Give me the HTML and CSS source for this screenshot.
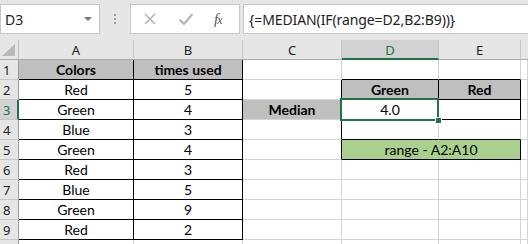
FILE: index.html
```html
<!DOCTYPE html>
<html>
<head>
<meta charset="utf-8">
<link rel="stylesheet" href="styles.css">
</head>
<body>
<div class="app">
  <div class="toolbar">
    <div class="namebox"><span class="nb-text">D3</span><span class="nb-arrow"></span></div>
    <div class="dots"><i></i><i></i><i></i></div>
    <div class="btns">
      <svg class="ico" width="14" height="14" viewBox="0 0 14 14"><path d="M2 2 L12 12 M12 2 L2 12" stroke="#b3b3b3" stroke-width="1.6" fill="none"/></svg>
      <svg class="ico" width="16" height="14" viewBox="0 0 16 14"><path d="M1.5 7.5 L6 12 L14.5 2" stroke="#b3b3b3" stroke-width="2" fill="none"/></svg>
      <span class="fx">f<span class="fx-x">x</span></span>
    </div>
    <div class="formula">{=MEDIAN(IF(range=D2,B2:B9))}</div>
  </div>
  <div class="sheet">
    <div class="corner"><svg width="14" height="12" viewBox="0 0 14 12"><path d="M13 0 L13 12 L0 12 Z" fill="#b9b9b9"/></svg></div>
    <div class="ch">A</div><div class="ch">B</div><div class="ch">C</div><div class="ch ch-sel">D</div><div class="ch">E</div><div class="ch ch-last"></div>

    <div class="rh">1</div><div class="c hd bx">Colors</div><div class="c hd bx">times used</div><div class="c"></div><div class="c bb"></div><div class="c bb"></div><div class="c"></div>
    <div class="rh">2</div><div class="c bx">Red</div><div class="c bx">5</div><div class="c br"></div><div class="c hd bx">Green</div><div class="c hd bx">Red</div><div class="c"></div>
    <div class="rh rh-sel">3</div><div class="c bx">Green</div><div class="c bx">4</div><div class="c hd">Median</div><div class="c bx">4.0</div><div class="c bx"></div><div class="c"></div>
    <div class="rh">4</div><div class="c bx">Blue</div><div class="c bx">3</div><div class="c br"></div><div class="c bb"></div><div class="c bb"></div><div class="c"></div>
    <div class="rh">5</div><div class="c bx">Green</div><div class="c bx">4</div><div class="c br"></div><div class="c note bx">range - A2:A10</div><div class="c"></div>
    <div class="rh">6</div><div class="c bx">Red</div><div class="c bx">3</div><div class="c"></div><div class="c"></div><div class="c"></div><div class="c"></div>
    <div class="rh">7</div><div class="c bx">Blue</div><div class="c bx">5</div><div class="c"></div><div class="c"></div><div class="c"></div><div class="c"></div>
    <div class="rh">8</div><div class="c bx">Green</div><div class="c bx">9</div><div class="c"></div><div class="c"></div><div class="c"></div><div class="c"></div>
    <div class="rh">9</div><div class="c bx">Red</div><div class="c bx">2</div><div class="c"></div><div class="c"></div><div class="c"></div><div class="c"></div>
    <div class="rh"></div><div class="c"></div><div class="c"></div><div class="c"></div><div class="c"></div><div class="c"></div><div class="c"></div>

    <div class="selection"><span class="handle"></span></div>
  </div>
</div>
</body>
</html>
```
FILE: styles.css
```css
* { box-sizing: border-box; }
html, body { margin: 0; padding: 0; background: #fff; }
body { width: 528px; height: 244px; overflow: hidden; }
.app { width: 528px; height: 244px; overflow: hidden; }

.toolbar {
  height: 40px;
  background: #e6e6e6;
  display: flex;
  align-items: flex-start;
  padding-top: 4px;
  font-family: "Noto Sans", "Open Sans", sans-serif;
  font-size: 14px;
  color: #222;
}
.namebox {
  width: 100px; height: 30px;
  background: #fff;
  border: 1px solid #c6c6c6;
  display: flex; align-items: center;
  padding-left: 4px;
  position: relative;
}
.nb-text { flex: 1; }
.nb-arrow {
  width: 0; height: 0;
  border-left: 4px solid transparent;
  border-right: 4px solid transparent;
  border-top: 4px solid #777;
  margin-right: 7px;
}
.dots {
  width: 30px; height: 30px;
  display: flex; flex-direction: column; align-items: center; justify-content: center; gap: 2px;
}
.dots i { display: block; width: 2px; height: 2px; background: #9e9e9e; }
.btns {
  width: 110px; height: 30px;
  background: #fff;
  border: 1px solid #c6c6c6;
  display: flex; align-items: center;
  padding-left: 12px;
  gap: 0;
}
.btns .ico:first-child { margin-right: 21px; }
.btns .ico:nth-child(2) { margin-right: 20px; }
.fx {
  font-family: "Liberation Serif", serif;
  font-style: italic;
  font-size: 15px;
  color: #555;
  letter-spacing: -1px;
}
.fx-x { font-size: 12px; }
.formula {
  flex: 1;
  margin-left: 3px;
  height: 30px;
  background: #fff;
  border: 1px solid #c6c6c6;
  border-right: none;
  display: flex; align-items: center;
  padding-left: 5px;
  letter-spacing: -0.1px;
}

.sheet {
  position: relative;
  display: grid;
  grid-template-columns: 19px 115px 109px 99px 97px 82px 1fr;
  grid-auto-rows: 20px;
  font-family: Lato, "Noto Sans", sans-serif;
  font-size: 14px;
  color: #000;
}
.corner {
  background: #e6e6e6;
  border-right: 1px solid #bdbdbd;
  border-bottom: 1px solid #ababab;
  display: flex; align-items: flex-end; justify-content: flex-end;
  padding: 0 2px 3px 0;
}
.ch {
  background: #e6e6e6;
  border-right: 1px solid #c6c6c6;
  border-bottom: 1px solid #ababab;
  display: flex; align-items: center; justify-content: center;
  font-family: "Noto Sans", "Open Sans", sans-serif;
  font-size: 13px;
  color: #222;
  padding-top: 1px;
}
.ch-sel { background: #d2d2d2; border-bottom: 2px solid #217346; color: #217346; }
.ch-last { border-right: none; }
.rh {
  background: #e6e6e6;
  border-right: 1px solid #9b9b9b;
  border-bottom: 1px solid #c6c6c6;
  display: flex; align-items: center;
  padding-left: 3px;
  font-family: "Noto Sans", "Open Sans", sans-serif;
  font-size: 13px;
  color: #222;
}
.rh-sel { background: #d2d2d2; border-right: 2px solid #217346; color: #217346; }
.c {
  border-right: 1px solid #d4d4d4;
  border-bottom: 1px solid #d4d4d4;
  display: flex; align-items: center; justify-content: center;
  white-space: nowrap;
}
.bx { border-right-color: #000; border-bottom-color: #000; }
.br { border-right-color: #000; }
.bb { border-bottom-color: #000; }
.hd { background: #bfbfbf; font-weight: bold; }
.note { grid-column: span 2; background: #a9d08e; }

.selection {
  position: absolute;
  left: 340px; top: 58px;
  width: 99px; height: 23px;
  border: 2px solid #217346;
  pointer-events: none;
}
.handle {
  position: absolute;
  right: -4px; bottom: -4px;
  width: 5px; height: 5px;
  background: #217346;
  outline: 1px solid #fff;
}
```
